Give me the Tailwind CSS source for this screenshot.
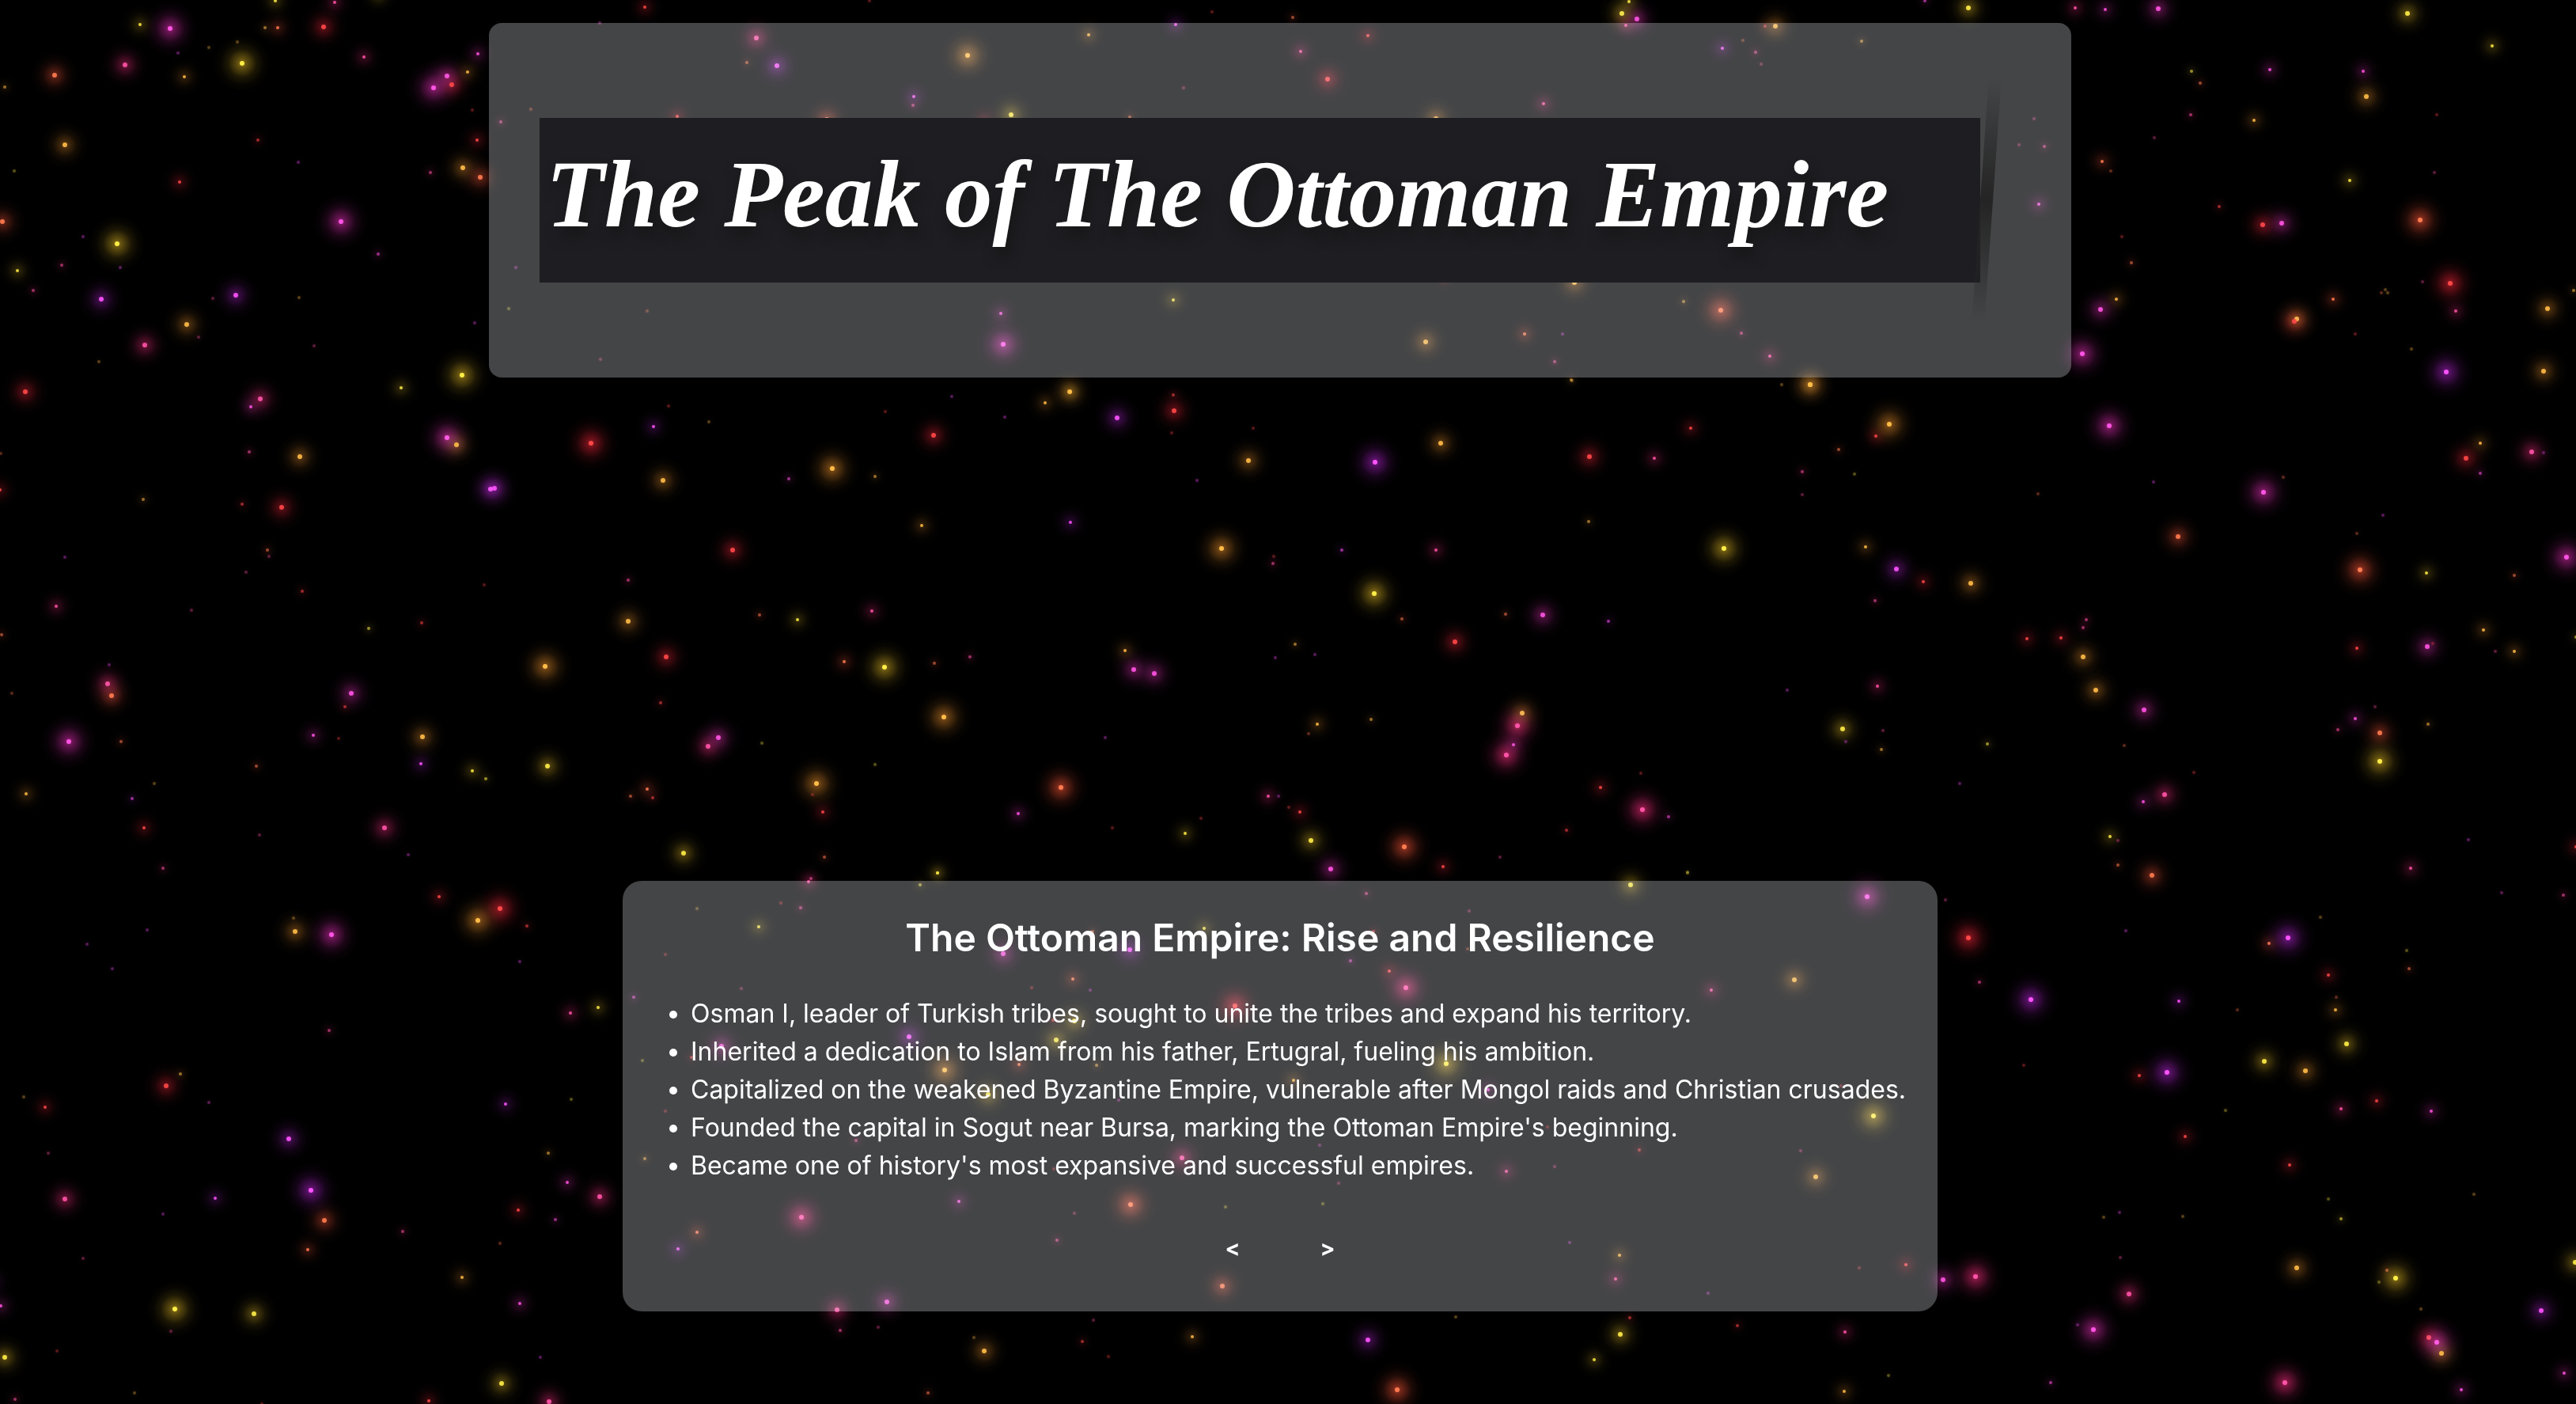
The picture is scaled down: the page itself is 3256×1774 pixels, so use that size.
<!DOCTYPE html>
<html lang="en">
<head>
<meta charset="utf-8">
<meta name="viewport" content="width=device-width, initial-scale=1">
<title>The Peak of The Ottoman Empire</title>
<script src="https://cdn.jsdelivr.net/npm/@tailwindcss/browser@4"></script>
</head>
<body class="bg-black text-white font-['Inter',sans-serif]">

<svg id="sky" aria-hidden="true" class="fixed inset-0 w-full h-full" viewBox="0 0 3256 1774" preserveAspectRatio="xMidYMid slice"></svg>

<main class="relative min-h-screen flex flex-col items-center justify-between pt-[29px] pb-[117px] pr-5 overflow-hidden">

  <header class="w-full max-w-[2000px] px-16 py-[120px] rounded-2xl bg-[#f5f9ff]/28">
    <div class="relative w-full max-w-[1821px] h-[208px] flex items-center pl-2 bg-[#1e1d22]">
      <h1 class="pb-4 whitespace-nowrap text-[121px] leading-none font-bold italic font-['Liberation_Serif',serif] [text-shadow:4px_12px_16px_#161616]">The Peak of The Ottoman Empire</h1>
      <span class="absolute -top-[51px] -right-[16px] w-4 h-[310px] rotate-4 bg-linear-to-b from-[#242424]/0 via-[#242424] to-[#242424]/0"></span>
    </div>
  </header>

  <section class="w-fit px-10 pt-10 pb-[54px] rounded-3xl bg-[#f5f9ff]/28">
    <h2 class="text-center text-5xl leading-16 font-semibold">The Ottoman Empire: Rise and Resilience</h2>
    <ul class="mt-10 pl-[46px] list-disc text-[32px] leading-12">
      <li>Osman I, leader of Turkish tribes, sought to unite the tribes and expand his territory.</li>
      <li>Inherited a dedication to Islam from his father, Ertugral, fueling his ambition.</li>
      <li>Capitalized on the weakened Byzantine Empire, vulnerable after Mongol raids and Christian crusades.</li>
      <li>Founded the capital in Sogut near Bursa, marking the Ottoman Empire's beginning.</li>
      <li>Became one of history's most expansive and successful empires.</li>
    </ul>
    <nav class="mt-[53px] flex justify-center gap-10" aria-label="Slides">
      <button type="button" class="w-20 h-[53px] text-[28px] font-bold" aria-label="Previous">&lt;</button>
      <button type="button" class="w-20 h-[53px] text-[28px] font-bold" aria-label="Next">&gt;</button>
    </nav>
  </section>
</main>

<script>
// Star chart: each sector has an origin, a horizontal and a vertical scale, and
// a list of "x y tint magnitude" entries in sector units.
const sectors = [
 [600, 0, 1.568, 3, `337 28 r3,247 86 m1,558 144 p4,540 238 t2,599 249 v4,977 209 o5,1216 132 o3,1390 92 v3,1462 44 r1,1405 333 p1,871 367 v3,869 400 p2,111 415 t1,51 462 p2,401 441 r3,697 452 t4,1063 436 y4,1010 455 r3,1299 444 t2,82 1014 v1,67 1169 y1,342 1178 t1,1385 1136 y3,1042 1189 m3,1047 1306 m5,249 1362 p1,1180 1484 y3,1385 1497 r2,783 2 r1`],
 [1600, 0, 1.4255, 3, `48 67 t2,184 134 r3,63 196 p3,111 301 r4,500 393 p3,307 450 o4,654 5 y3,641 52 y4,668 73 m4,648 97 p3,918 100 o4,899 98 r2,822 183 v3,859 152 t1,882 197 p2,893 243 p1,1073 156 o2,1188 4 m2,753 1142 o2,819 1176 t5,857 1264 p2,908 1350 p3,466 1265 t3,535 1265 v1,288 1295 o4,520 1372 p2,550 1440 o2,930 1458 o1,981 1457 o4,556 1070 o4,322 1065 r2`],
 [2460, 0, 1.9698, 1.7422, `55 18 y4,321 17 p3,396 21 m3,528 20 m4,1148 29 y4,1360 101 y3,611 156 y2,632 183 t2,608 252 p2,806 154 m3,1038 156 m3,1045 212 o4,766 264 o3,1221 252 r1,519 303 p1,388 355 t3,410 376 t1,1005 397 y3,1215 380 p1,218 262 p1,182 319 p1,244 323 p2,231 450 m3,679 455 r2,788 495 r4,836 492 m4,1179 484 t5,438 521 r1,460 578 t2,423 659 o3,385 682 m4,339 778 m5,1254 624 r5,1186 621 p1,1268 684 p3,964 658 t3,1094 637 o1,1083 644 t1,1100 644 o1,1562 640 o2,1498 679 o4,873 702 o4,866 708 r4,1019 735 r1,1159 769 o1,1245 819 v5,1488 817 o4,406 938 m5,1329 975 o3,1295 1008 r4,1330 1042 m2,1457 995 p4,1487 997 v1,516 1061 v1,790 1084 m5,840 1050 t1,229 1087 t1,1087 1134 v1,577 1181 t4,1022 1175 t1,1031 1254 t5,1544 1226 m5,1195 1261 y3,1415 1267 t2,61 1284 o4,348 1364 p2,341 1381 p2,200 1406 r3,285 1405 r3,340 1446 o4,372 1520 o4,492 1563 m4,1022 1426 r3,1198 1424 m4,1212 1417 r1,1338 1386 o3,1368 1434 p1,1415 1434 o3,1568 1403 y2,1067 1555 p1`],
 [0, 0, 2.529, 1.7422, `448 54 y3,544 62 m5,569 117 v1,399 142 p4,174 165 t4,15 191 o2,588 169 o3,758 93 o1,773 139 y5,668 104 o1,880 2 y3,846 61 o2,888 61 t3,1035 60 r4,1069 5 p3,1164 126 p3,1210 -10 y3,208 318 o4,573 400 r3,825 309 r2,45 376 y1,954 357 v1,1527 118 m3,1495 158 o3,1428 168 m4,1386 194 m5,1443 187 r4,1510 242 r1,1525 309 r3,1376 380 p2,1480 369 o4,1535 390 t4,8 488 t4,266 521 v1,374 537 y5,384 589 v1,55 596 y3,197 584 p2,105 640 p2,324 659 v4,1089 488 m5,1208 560 m2,753 650 v4,681 657 p1,598 714 o4,634 742 p1,957 655 o1,1517 710 v1,462 760 p4,317 796 o1,1004 761 p1,1478 826 y5,1281 854 y3,80 863 r4,831 878 p4,801 896 m3,1429 964 m5,1459 979 o4,796 995 p2,958 1005 o4,2 999 t1,0 1078 r3,1568 1076 v4,457 1100 o2,773 1110 r2,901 1116 r4,854 1210 t2,859 1225 p1,208 1227 v1,786 1260 p1,967 1301 r2,180 1335 p3,6 1398 t2,1547 1288 r1,612 1343 p1,1179 1384 y2,1347 1371 r2,348 1464 v1,343 1506 p4,357 1532 t4,39 1527 t1,1122 1527 m4,1102 1555 r2`],
 [0, 900, 1.96, 1.794, `170 67 m5,299 67 t2,777 52 m3,838 60 r1,1047 55 o4,1043 117 v3,636 122 t2,1171 132 y3,1204 150 y2,382 161 o1,64 184 o3,327 195 v2,356 262 r3,643 278 p1,952 262 p4,1012 323 v1,403 353 p2,1088 418 r3,727 467 o1,732 497 o4,822 504 m5,1239 445 r5,1184 471 o5,1306 485 r2,365 493 v1,216 525 v1,279 582 v1,1287 565 v1,1414 681 p3,1482 669 y3,816 721 p2,446 820 o2,412 846 r4,58 872 o1,112 896 r3,517 884 m1,1416 878 y1,1252 888 v3,715 967 v4,120 1000 p1,1358 999 o2,770 1084 v5,804 1152 t4,762 1219 t3,161 1103 p4,534 1101 v3,403 1137 v1,1405 1065 m3,1485 1098 p4,1284 1128 r3,1375 1150 m2,997 1177 p2,1238 1203 t1,205 1238 p1,1145 1281 o3,2 1346 m3,-20 1290 v3,1287 1340 m3,433 1353 y5,424 1403 p1,630 1363 y4,12 1462 y4,141 1447 r1,334 1542 o1,37 1558 p2,649 1568 r1,1338 1463 v1,1242 1521 y4,1063 1561 r3,1360 1563 p4`],
 [2440, 900, 1.9216, 1.794, `138 71 y2,71 162 v1,471 76 t1,990 40 p2,1031 14 m3,1091 47 t4,1209 27 o2,1091 111 y5,640 136 r1,569 187 p4,516 202 m3,437 282 y3,455 291 p1,456 347 t2,538 370 t4,36 426 p1,1167 354 p3,1307 288 v1,1388 409 m1,1537 414 p2,1568 305 r3,93 511 r5,475 496 v1,823 523 t3,868 512 v5,947 465 o1,120 611 p2,244 651 v5,603 654 v3,967 595 r3,986 645 t1,984 675 o3,1156 540 y1,1162 582 t2,745 674 t1,1011 752 y4,811 792 y4,911 813 o4,227 800 r1,508 824 r3,575 816 v5,717 902 y1,1084 881 r3,998 898 p3,1217 905 m3,618 961 r3,873 1027 r3,421 1145 o1,459 1134 v1,613 1143 o1,967 1103 y1,997 1148 y2,1321 1092 o1,461 1236 p1,31 1286 m4,109 1279 p5,482 1318 p4,396 1400 m5,358 1388 v1,890 1260 o4,1108 1265 t2,1089 1292 y1,1129 1283 y5,1566 1247 y4,1192 1353 o1,1210 1417 r4,1230 1428 m5,1242 1453 o4,1484 1356 v4,1289 1535 m3,1539 1498 m3,293 1519 m2,860 1520 p5`],
 [620, 480, 1.7043, 2.489, `217 200 r5,351 148 v3,384 81 r1,471 133 o1,850 99 r1,993 53 v1,1107 116 v1,1248 37 o4,1194 73 o3,1349 120 v4,1472 96 r4,1467 168 r1,955 174 r4,372 317 o4,643 312 m2,736 278 o5,828 304 o2,8 340 v4,928 458 o3,1250 447 v3,1522 316 v1,522 534 r4,297 629 p2,297 759 o4,580 739 t2,662 754 y3,822 726 p3,118 900 o5,379 872 r4,761 886 t3,849 904 y5,956 892 t2,1033 870 p2,1366 850 o3,1386 910 m4,1430 923 m4,366 1015 r2,977 1060 o5,491 1125 m4,469 1153 p4,585 1143 y1,828 1209 y1,1324 1126 v1,123 1214 y4,338 1287 t3,301 1310 t2,350 1315 r2,702 1269 o5,693 1304 r1,716 1360 r3,1229 1283 t5,1136 1364 m3,1340 1408 r1,1496 1427 y3,1530 1379 r1,416 1488 y4,720 1500 t2,963 1551 y3,690 1568 p2`],
 [1540, 480, 1.7043, 2.489, `75 152 r1,64 253 o4,338 259 v5,479 200 o4,761 3 o1,1018 152 r3,799 242 r4,939 247 p3,1275 14 o4,1446 139 o5,1417 177 r3,1337 218 t2,1371 295 y1,1257 288 p2,1257 361 p1,798 445 o2,6 531 o5,120 556 r1,117 577 p2,266 536 v2,469 535 p3,336 671 y5,1089 531 y5,1394 526 o3,1460 594 v4,1518 634 r3,1415 694 p2,396 751 t2,618 737 t2,698 739 m4,841 759 v2,510 823 r4,166 831 o2,123 873 v1,208 863 v1,1419 964 p3,1226 975 v1,213 1083 o3,194 1112 t1,329 1068 o2,655 1048 o4,644 1087 p5,636 1147 m3,620 1181 p5,1344 1098 y4,1352 1138 v1,1431 1102 p1,1429 1162 o2,108 1310 p3,129 1309 v1,151 1343 r1,176 1359 r3,200 1448 y4,242 1537 m4,824 1283 r3,910 1238 r1,914 1352 p5,969 1374 m2,750 1415 r2,400 1469 t5,484 1531 r3,606 1501 p1,1010 1549 y1`],
 [780, 1090, 1.8233, 2.703, `738 35 y2,699 76 y2,442 64 p3,378 139 r1,423 153 p2,185 158 o1,326 218 y3,112 313 r1,38 459 m2,286 431 p1,890 311 m4,1182 296 v4,1096 235 t2,1352 225 y3,1050 397 t3,1090 436 v1,956 428 r1,1005 538 r2,1054 541 y4,1012 606 y4,1424 489 r5,672 595 v4,240 627 m4,172 665 r2,59 675 y1,755 708 o5,926 688 t3,1105 693 o2,855 792 y4,1156 810 m1,112 849 r1,551 950 p2,63 1012 o2,1245 918 m1,1301 1008 p4,1007 1047 r1,787 1158 m3,425 1210 p5,1184 1167 t5,1403 1177 y1,1054 1198 p1,185 1262 t3,140 1320 v3,1013 1288 p2,1395 1445 t4,622 1499 m4,507 1527 p4`],
 [1620, 1090, 1.8233, 2.703, `804 77 y4,935 34 y1,195 106 p2,1350 115 m5,432 165 p1,158 334 m2,248 370 r3,286 428 p5,212 235 r2,428 295 t1,990 435 p3,1182 399 o4,380 686 y5,28 742 o3,475 776 m3,1289 762 r1,1363 866 y5,88 966 m1,612 902 r1,824 980 r2,1196 983 p1,1230 1072 o4,517 1053 p3,629 1038 p1,132 1096 p1,94 1166 y1,663 1298 v1,778 1342 o3,770 1421 p3,1331 1383 r1,1438 1373 r3,983 1471 v1`],
 [780, 1654, 1.8667, 3, `526 80 p2,616 68 p1,842 107 o1,867 160 o4,1097 122 r2,1124 42 p1,1159 180 r1,1358 106 o3,734 318 t2`],
 [1620, 1654, 1.8667, 3, `203 117 v4,272 306 t5,410 29 o1,799 95 y4,822 32 r2,737 192 y3,1076 64 r2,1329 86 p3,1327 312 o3,1431 251 y1`]
];
// core and halo colour of each tint
const tints = {
  y: ['#ffee48', '#b0901c'], o: ['#ffbc48', '#b06c20'], t: ['#ff7c50', '#c8442c'],
  r: ['#ff4848', '#c01c2c'], p: ['#ff54a8', '#cc2468'], m: ['#ff54e4', '#b42490'], v: ['#ff54ff', '#901ca8']
};
// halo radius, halo strength, core radius, core strength by magnitude
const mags = [null, [7, .15, 2, .3], [15, .22, 2, .55], [24, .4, 2, .85], [30, .7, 3, .9], [36, 1, 3, 1]];
let defs = '', dots = '';
for (const t in tints) {
  const c = tints[t][1];
  defs += `<radialGradient id="halo-${t}"><stop offset="0" stop-color="${c}" stop-opacity=".8"/><stop offset=".2" stop-color="${c}" stop-opacity=".5"/><stop offset=".5" stop-color="${c}" stop-opacity=".16"/><stop offset=".75" stop-color="${c}" stop-opacity=".04"/><stop offset="1" stop-color="${c}" stop-opacity="0"/></radialGradient>`;
}
for (const [ox, oy, sx, sy, list] of sectors) {
  for (const entry of list.split(',')) {
    const [px, py, code] = entry.trim().split(' ');
    const [hr, ha, cr, ca] = mags[+code[1]];
    const x = Math.round(ox + px / sx), y = Math.round(oy + py / sy);
    dots += `<circle cx="${x}" cy="${y}" r="${hr}" fill="url(#halo-${code[0]})" opacity="${ha}" class="mix-blend-screen"/><circle cx="${x}" cy="${y}" r="${cr}" fill="${tints[code[0]][0]}" opacity="${ca}"/>`;
  }
}
document.getElementById('sky').innerHTML = `<defs>${defs}</defs>${dots}`;
</script>
</body>
</html>
